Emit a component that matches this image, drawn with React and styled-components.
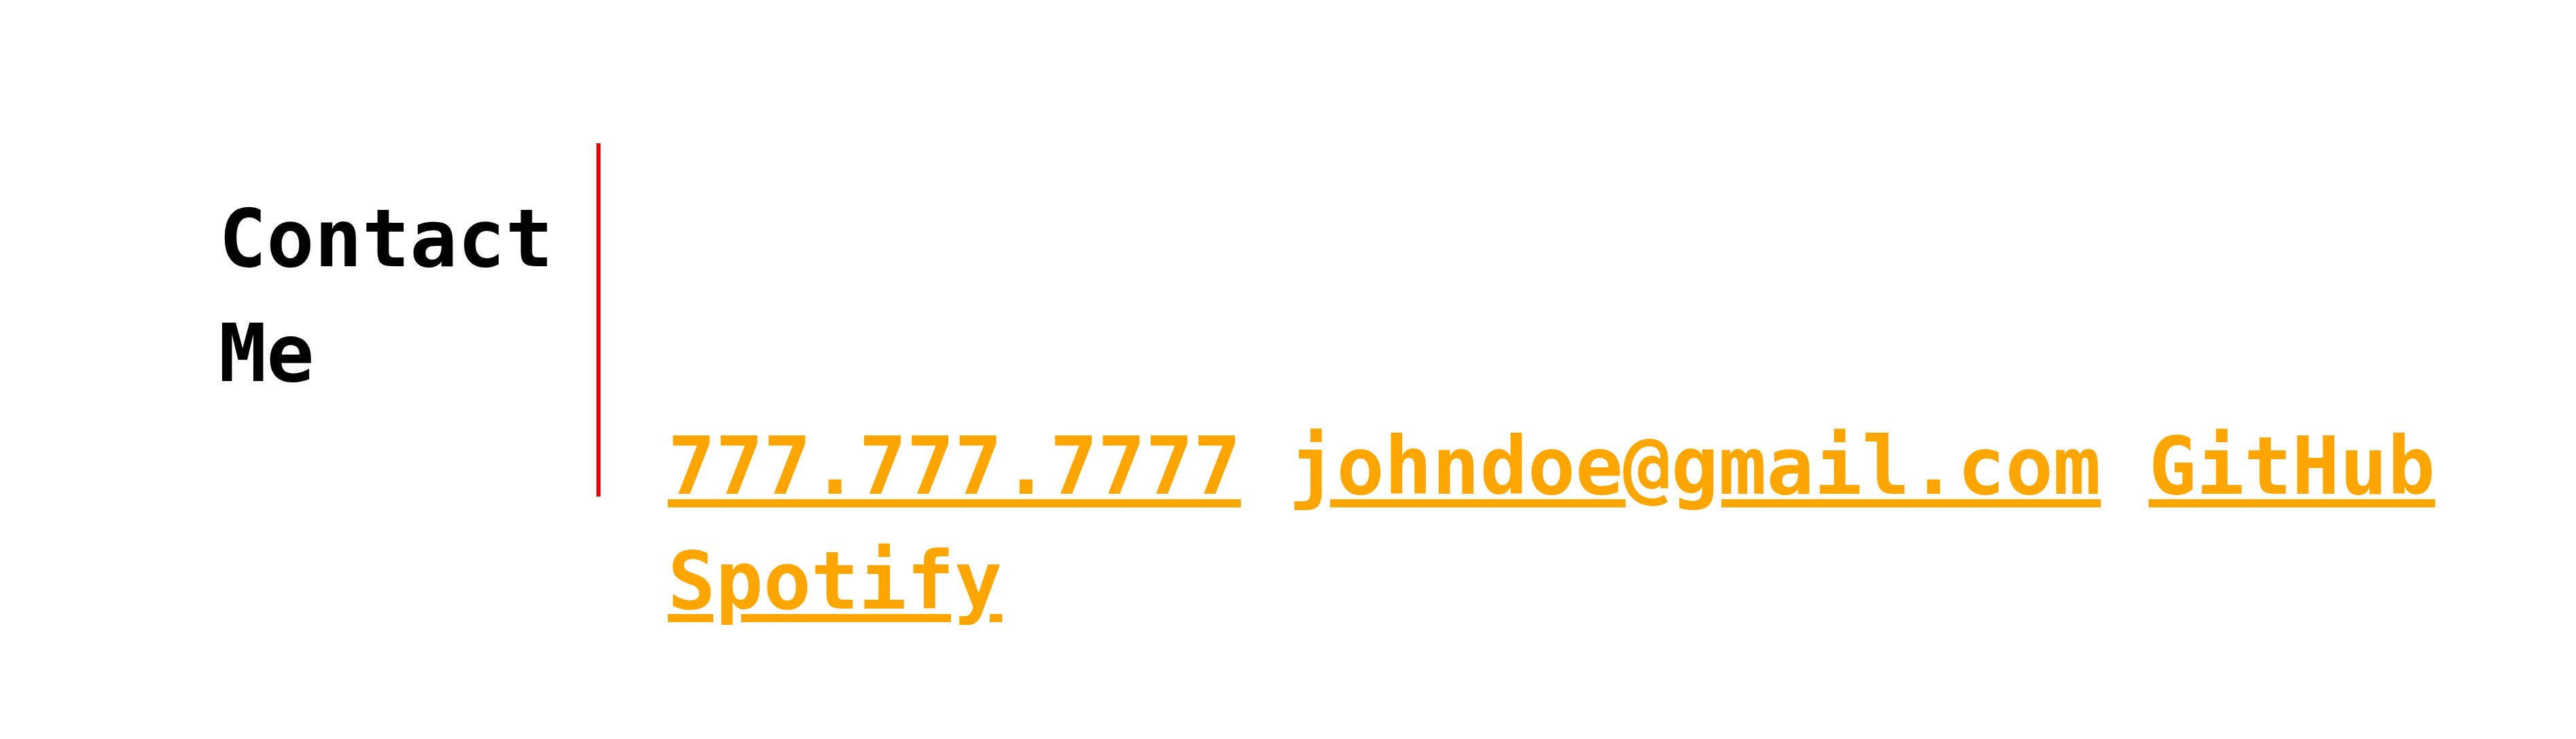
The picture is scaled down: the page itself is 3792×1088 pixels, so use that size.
import React from "react";
import styled, { createGlobalStyle } from "styled-components";

const GlobalStyle = createGlobalStyle`
  html, body {
    margin: 0;
    padding: 0;
    background: #ffffff;
  }
  body {
    font-family: "DejaVu Sans Mono", "Liberation Mono", monospace;
  }
`;

const Section = styled.section`
  display: flex;
  align-items: flex-start;
  padding: 211px 0 0 322px;
  font-family: "DejaVu Sans Mono", "Liberation Mono", monospace;
  font-weight: 700;
  font-size: 116.8px;
  line-height: 169px;
`;

const Heading = styled.h2`
  box-sizing: border-box;
  flex: 0 0 562px;
  width: 562px;
  height: 520px;
  margin: 0;
  padding-top: 57px;
  border-right: 6px solid #ee0000;
  font-size: inherit;
  line-height: inherit;
  font-weight: 700;
  color: #000000;
`;

const Links = styled.div`
  flex: 1 1 auto;
  margin-top: 392px;
  padding-left: 99px;
`;

const Link = styled.a`
  color: #ffa500;
  text-decoration: underline;
  text-decoration-thickness: 12px;
  text-underline-offset: 8px;
  text-decoration-skip-ink: auto;
`;

const links = [
  { label: "777.777.7777", href: "#phone" },
  { label: "johndoe@gmail.com", href: "#email" },
  { label: "GitHub", href: "#github" },
  { label: "Spotify", href: "#spotify" },
];

export default function App() {
  return (
    <>
      <GlobalStyle />
      <Section>
        <Heading>Contact Me</Heading>
        <Links>
          {links.map((l, i) => (
            <React.Fragment key={l.label}>
              <Link href={l.href}>{l.label}</Link>
              {i < links.length - 1 ? " " : null}
            </React.Fragment>
          ))}
        </Links>
      </Section>
    </>
  );
}
